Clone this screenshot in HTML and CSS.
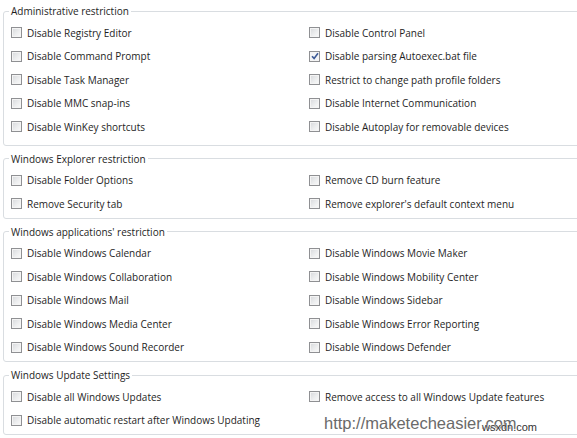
FILE: index.html
```html
<!DOCTYPE html>
<html>
<head>
<meta charset="utf-8">
<link rel="stylesheet" href="styles.css">
</head>
<body>
<div class="page">
  <fieldset class="group group-first">
    <legend>Administrative restriction</legend>
    <div class="grid">
      <label class="opt"><span class="cb"></span>Disable Registry Editor</label>
      <label class="opt"><span class="cb"></span>Disable Control Panel</label>
      <label class="opt"><span class="cb"></span>Disable Command Prompt</label>
      <label class="opt"><span class="cb checked"><svg viewBox="0 0 8 8" width="8" height="8"><path d="M1 4.2 L3.1 6.4 L7 1.2" fill="none" stroke="#3d5a96" stroke-width="1.6"/></svg></span>Disable parsing Autoexec.bat file</label>
      <label class="opt"><span class="cb"></span>Disable Task Manager</label>
      <label class="opt"><span class="cb"></span>Restrict to change path profile folders</label>
      <label class="opt"><span class="cb"></span>Disable MMC snap-ins</label>
      <label class="opt"><span class="cb"></span>Disable Internet Communication</label>
      <label class="opt"><span class="cb"></span>Disable WinKey shortcuts</label>
      <label class="opt"><span class="cb"></span>Disable Autoplay for removable devices</label>
    </div>
  </fieldset>
  <fieldset class="group">
    <legend>Windows Explorer restriction</legend>
    <div class="grid">
      <label class="opt"><span class="cb"></span>Disable Folder Options</label>
      <label class="opt"><span class="cb"></span>Remove CD burn feature</label>
      <label class="opt"><span class="cb"></span>Remove Security tab</label>
      <label class="opt"><span class="cb"></span>Remove explorer's default context menu</label>
    </div>
  </fieldset>
  <fieldset class="group">
    <legend>Windows applications' restriction</legend>
    <div class="grid">
      <label class="opt"><span class="cb"></span>Disable Windows Calendar</label>
      <label class="opt"><span class="cb"></span>Disable Windows Movie Maker</label>
      <label class="opt"><span class="cb"></span>Disable Windows Collaboration</label>
      <label class="opt"><span class="cb"></span>Disable Windows Mobility Center</label>
      <label class="opt"><span class="cb"></span>Disable Windows Mail</label>
      <label class="opt"><span class="cb"></span>Disable Windows Sidebar</label>
      <label class="opt"><span class="cb"></span>Disable Windows Media Center</label>
      <label class="opt"><span class="cb"></span>Disable Windows Error Reporting</label>
      <label class="opt"><span class="cb"></span>Disable Windows Sound Recorder</label>
      <label class="opt"><span class="cb"></span>Disable Windows Defender</label>
    </div>
  </fieldset>
  <fieldset class="group group-last">
    <legend>Windows Update Settings</legend>
    <div class="grid">
      <label class="opt"><span class="cb"></span>Disable all Windows Updates</label>
      <label class="opt"><span class="cb"></span>Remove access to all Windows Update features</label>
      <label class="opt"><span class="cb"></span>Disable automatic restart after Windows Updating</label>
    </div>
    <div class="watermark">http://maketecheasier.com</div>
    <div class="stamp">wsxdn.com</div>
  </fieldset>
</div>
</body>
</html>
```

FILE: styles.css
```css
html, body {
  margin: 0;
  padding: 0;
  background: #ffffff;
  overflow: hidden;
}
.page {
  width: 577px;
  height: 438px;
  overflow: hidden;
  font-family: "Open Sans", "Noto Sans", sans-serif;
  font-size: 10px;
  color: #1e1e1e;
}
.group {
  position: relative;
  margin: 5px -10px 0 3px;
  padding: 0 0 2px 7px;
  border: 1px solid #d9dde1;
  border-radius: 3px;
  min-width: 0;
}
.group-first {
  margin-top: 3px;
  padding-bottom: 6px;
}
legend {
  padding: 0 2px;
  margin-left: -2px;
  line-height: 16px;
  font-size: 10px;
  color: #1e1e1e;
}
.grid {
  display: grid;
  grid-template-columns: 298px 1fr;
  grid-auto-rows: 23.5px;
  padding-top: 2px;
}
.opt {
  display: flex;
  align-items: center;
  gap: 5px;
  white-space: nowrap;
}
.cb {
  box-sizing: border-box;
  width: 11px;
  height: 11px;
  flex: none;
  border: 1px solid #8f9093;
  background: linear-gradient(135deg, #d6d8db 0%, #eeeff0 60%, #fafafa 100%);
  box-shadow: inset 0 0 0 1px #f4f4f4;
  display: flex;
  align-items: center;
  justify-content: center;
}
.cb.checked {
  background: #f3f4f6;
}
.watermark {
  position: absolute;
  left: 320px;
  top: 31px;
  font-family: "Liberation Sans", Arial, sans-serif;
  font-size: 16.5px;
  color: #6a6a6a;
  white-space: nowrap;
}
.stamp {
  position: absolute;
  left: 478px;
  top: 38px;
  font-family: "Liberation Sans", Arial, sans-serif;
  font-size: 11px;
  color: #333333;
  text-shadow: 0 0 2px #ffffff, 0 0 2px #ffffff;
  white-space: nowrap;
}
```
